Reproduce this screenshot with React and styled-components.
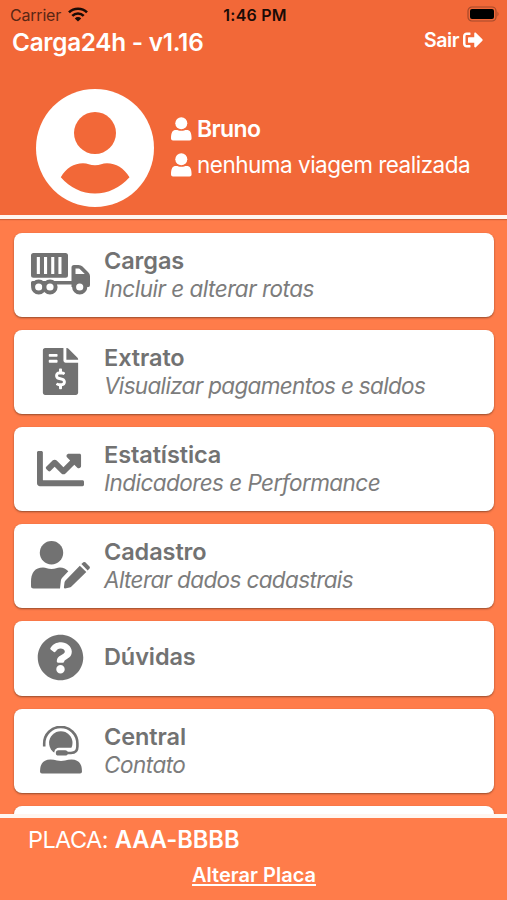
import React from "react";
import styled, { createGlobalStyle } from "styled-components";
import {
  FaChartLine,
  FaFileInvoiceDollar,
  FaQuestionCircle,
  FaSignOutAlt,
} from "react-icons/fa";

const GlobalStyle = createGlobalStyle`
  * { box-sizing: border-box; }
  body { margin: 0; font-family: Inter, "Liberation Sans", sans-serif; }
`;

const Screen = styled.div`
  width: 507px;
  height: 900px;
  overflow: hidden;
  display: flex;
  flex-direction: column;
  background: #ff7c4a;
  color: #fff;
`;

const Header = styled.header`
  height: 219px;
  flex: none;
  background: #f26838;
  border-bottom: 4px solid #fff6f0;
  box-shadow: 0 1px 1px rgba(120, 50, 20, 0.35);
`;

const StatusBar = styled.div`
  height: 29px;
  padding: 1px 7px 0 10px;
  display: grid;
  grid-template-columns: 1fr auto 1fr;
  align-items: center;
  color: #1a0b06;
`;

const Carrier = styled.div`
  display: flex;
  align-items: center;
  gap: 7px;
  svg { margin-bottom: 2px; }
`;

const BatteryCell = styled.div`
  display: flex;
  justify-content: flex-end;
  padding-bottom: 2px;
`;

const Label = styled.span`
  display: block;
  white-space: nowrap;
  font-size: ${(p) => p.$size}px;
  line-height: ${(p) => p.$line || 28}px;
  font-weight: ${(p) => p.$weight || 400};
  letter-spacing: ${(p) => p.$track || 0}px;
`;

const CarrierName = styled(Label)`
  color: #5a2614;
`;

const TitleBar = styled.div`
  height: 28px;
  padding: 0 24px 0 12px;
  display: flex;
  justify-content: space-between;
`;

const AppTitle = styled(Label)`
  margin-top: -1px;
`;

const Logout = styled.div`
  height: 22px;
  display: flex;
  align-items: center;
  gap: 4px;
  svg { margin-bottom: 1px; }
`;

const Profile = styled.div`
  display: flex;
  padding: 32px 0 0 36px;
  gap: 17px;
`;

const UserLines = styled.div`
  padding-top: 22px;
`;

const UserLine = styled.div`
  height: 36px;
  display: flex;
  align-items: center;
  gap: 5px;
  svg { flex: none; margin-bottom: 1px; }
`;

const Menu = styled.main`
  flex: 1;
  min-height: 0;
  overflow: hidden;
  padding: 14px 13.5px 0 14px;
  display: flex;
  flex-direction: column;
  gap: 13.5px;
`;

const Card = styled.div`
  flex: none;
  height: ${(p) => (p.$short ? 74.5 : 83.5)}px;
  background: #fff;
  border-radius: 8px;
  box-shadow: 0 1px 2px rgba(90, 50, 30, 0.65);
  display: flex;
  align-items: center;
  color: #727272;
`;

const IconCell = styled.div`
  width: 90px;
  padding: 0 0 1px 3px;
  flex: none;
  display: flex;
  justify-content: center;
`;

const CardText = styled.div`
  display: flex;
  flex-direction: column;
  padding-bottom: ${(p) => (p.$short ? 3 : 0)}px;
`;

const Subtitle = styled(Label)`
  font-style: italic;
  color: #7c7c7c;
`;

const Footer = styled.footer`
  flex: none;
  height: 86px;
  border-top: 4px solid #fff6f0;
  padding: 8px 0 0;
`;

const Plate = styled.div`
  display: flex;
  padding-left: 28px;
  gap: 7px;
`;

const PlateLink = styled.a`
  display: flex;
  justify-content: center;
  margin-top: 7px;
  padding-left: 1px;
  text-decoration: underline;
  text-decoration-thickness: 2px;
  text-underline-offset: 2px;
  text-decoration-skip-ink: none;
`;

const WifiIcon = () => (
  <svg width="20" height="15" viewBox="0 0 20 15" fill="none" stroke="currentColor" strokeWidth="2.6">
    <path d="M1 5.4a12.8 12.8 0 0 1 18 0M4.3 8.9a8.1 8.1 0 0 1 11.4 0" />
    <path d="M10 14.6 6.8 11.4a4.6 4.6 0 0 1 6.4 0Z" fill="currentColor" stroke="none" />
  </svg>
);

const BatteryIcon = () => (
  <svg width="34" height="16" viewBox="0 0 34 16">
    <rect x="2" y="1" width="28" height="14" rx="4" fill="none" stroke="#a4492a" strokeWidth="1.2" />
    <rect x="4" y="3" width="24" height="10" rx="2" fill="#000" />
    <path d="M31.5 5.5q2 2.5 0 5Z" fill="#a4492a" />
  </svg>
);

const AvatarIcon = () => (
  <svg width="118" height="118" viewBox="0 0 118 118">
    <circle cx="59" cy="59" r="59" fill="#fff" />
    <circle cx="59" cy="44" r="21" fill="#f26838" />
    <path d="M24.8 88.300C30 79 38 74.300 47 74.300c4.500 0 7 2 12 2s7.500-2 12-2c9 0 17 4.700 22.500 14C84 99 72 104.500 59 104.500S34 99 24.800 88.300Z" fill="#f26838" />
  </svg>
);

const PersonIcon = () => (
  <svg width="21" height="24" viewBox="0 0 21 24" fill="currentColor">
    <circle cx="10.300" cy="6.200" r="6" />
    <path d="M0 21.500C0 15.500 1.500 13 5 13C7 13 8 13.800 10.300 13.800S13.600 13 15.600 13C19.100 13 20.600 15.500 20.600 21.500Q20.600 23.500 18.600 23.500H2Q0 23.500 0 21.500Z" />
  </svg>
);

const TruckIcon = () => (
  <svg width="59" height="42" viewBox="0 0 59 42" fill="currentColor">
    <path fillRule="evenodd" d="M2.500 0H34.500Q37 0 37 2.500V22.300Q37 24.800 34.500 24.800H2.500Q0 24.800 0 22.300V2.500Q0 0 2.500 0ZM5.800 4V21H8.900V4ZM13 4V21H16.100V4ZM20.200 4V21H23.300V4ZM27.400 4V21H30.500V4Z" />
    <path d="M1.500 28H42V31.600H26V34H1.500Q0 34 0 32V29.500Q0 28 1.500 28Z" />
    <path fillRule="evenodd" d="M40.500 33V14.500Q40.500 12 43 12H47.500Q50 12 51.500 13.500L57 19Q59 21 59 23V32Q59 34 57.500 34H40.500ZM44.500 15.500V21H53.800L48.500 15.800Q48 15.500 47.500 15.500Z" />
    <g fill="#fff" stroke="currentColor" strokeWidth="4">
      <circle cx="7.700" cy="34" r="5.600" />
      <circle cx="19" cy="34" r="5.600" />
      <circle cx="48.700" cy="34" r="5.600" />
    </g>
  </svg>
);

const UserPencilIcon = () => (
  <svg width="59" height="48" viewBox="0 0 59 48" fill="currentColor">
    <circle cx="20.500" cy="11.700" r="11.700" />
    <path d="M0 45V41Q0 26.500 12 26.500C15 26.500 16.500 28 20.500 28S26 26.500 29 26.500Q34 26.500 37.300 30.300L31 37Q30 38 29.900 39.500L29 47.500H2.500Q0 47.500 0 45Z" />
    <path d="M48.800 24.700 55.300 31 40.200 45.800Q39.500 46.500 38.500 46.600L34 47.400Q32.800 47.500 32.900 46.300L33.500 41.600Q33.700 40.300 34.500 39.400Z" />
    <path d="M50.400 23.100 52.300 21.300Q53.300 20.500 54.300 21.300L58.500 25.600Q59.300 26.600 58.500 27.600L56.700 29.400Z" />
  </svg>
);

const HeadsetIcon = () => (
  <svg width="42" height="48" viewBox="0 0 42 48" fill="currentColor">
    <circle cx="20.800" cy="17" r="11.700" />
    <path d="M36 26.500H19" stroke="#fff" strokeWidth="9.500" strokeLinecap="round" />
    <path d="M4.200 20.500V17.500A16.600 16.600 0 0 1 37.400 17.500V20.500Q37.400 27 31 27H22" fill="none" stroke="currentColor" strokeWidth="2.600" />
    <rect x="15.800" y="24.200" width="12" height="5.400" rx="2.700" />
    <path d="M0 45.500Q0 33.500 10.500 33.500Q14 33.500 17 34.500Q21 35.300 25 34.500Q28 33.500 31.500 33.500Q42 33.500 42 45.500Q42 47.500 40 47.500H2Q0 47.500 0 45.500Z" />
  </svg>
);

const items = [
  { icon: <TruckIcon />, title: "Cargas", sub: "Incluir e alterar rotas", track: -0.5 },
  { icon: <FaFileInvoiceDollar size={47} />, title: "Extrato", sub: "Visualizar pagamentos e saldos", track: -0.67 },
  { icon: <FaChartLine size={47} />, title: "Estatística", sub: "Indicadores e Performance", track: -0.55 },
  { icon: <UserPencilIcon />, title: "Cadastro", sub: "Alterar dados cadastrais", track: -0.63 },
  { icon: <FaQuestionCircle size={47} />, title: "Dúvidas" },
  { icon: <HeadsetIcon />, title: "Central", sub: "Contato", track: -0.5 },
];

export default function App() {
  return (
    <Screen>
      <GlobalStyle />
      <Header>
        <StatusBar>
          <Carrier>
            <CarrierName $size={16} $track={-0.2}>Carrier</CarrierName>
            <WifiIcon />
          </Carrier>
          <Label $size={16} $weight={600} $track={0.2}>1:46 PM</Label>
          <BatteryCell><BatteryIcon /></BatteryCell>
        </StatusBar>
        <TitleBar>
          <AppTitle $size={24.3} $weight={600} $track={-0.25}>Carga24h - v1.16</AppTitle>
          <Logout>
            <Label $size={19.5} $weight={600} $track={-0.4}>Sair</Label>
            <FaSignOutAlt size={20} />
          </Logout>
        </TitleBar>
        <Profile>
          <AvatarIcon />
          <UserLines>
            <UserLine>
              <PersonIcon />
              <Label $size={23} $weight={600} $track={-0.6}>Bruno</Label>
            </UserLine>
            <UserLine>
              <PersonIcon />
              <Label $size={22.5} $track={-0.5}>nenhuma viagem realizada</Label>
            </UserLine>
          </UserLines>
        </Profile>
      </Header>
      <Menu>
        {items.map(({ icon, title, sub, track }) => (
          <Card key={title} $short={!sub}>
            <IconCell>{icon}</IconCell>
            <CardText $short={!sub}>
              <Label $size={23.5} $weight={600} $track={-0.1}>{title}</Label>
              {sub && <Subtitle $size={22.5} $track={track}>{sub}</Subtitle>}
            </CardText>
          </Card>
        ))}
        <Card />
      </Menu>
      <Footer>
        <Plate>
          <Label $size={23.5} $track={-0.6}>PLACA:</Label>
          <Label $size={23.7} $weight={600} $track={-0.05}>AAA-BBBB</Label>
        </Plate>
        <PlateLink>
          <Label $size={20} $weight={600}>Alterar Placa</Label>
        </PlateLink>
      </Footer>
    </Screen>
  );
}
